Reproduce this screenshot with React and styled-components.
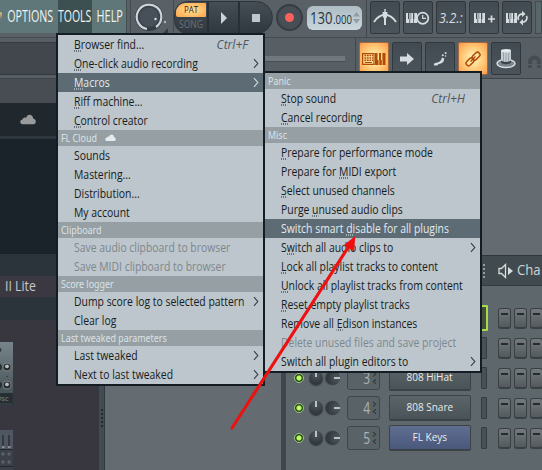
import React from "react";
import styled, { createGlobalStyle, css } from "styled-components";

const GlobalStyle = createGlobalStyle`
  * { box-sizing: border-box; }
  body {
    margin: 0;
    overflow: hidden;
    font-family: "Open Sans", "Noto Sans", sans-serif;
  }
`;

const color = {
  ink: "#171c21",
  menu: "#bdc6cc",
  menuHeader: "#959fa4",
  menuActive: "#5d6b74",
  border: "#141d24",
  icon: "#d5dde0",
};

const Screen = styled.div`
  position: relative;
  display: flex;
  flex-direction: column;
  width: 542px;
  height: 470px;
  overflow: hidden;
  background: #646b71;
`;

/* ---------- toolbar ---------- */

const Toolbar = styled.header`
  flex: none;
  height: 79px;
  background: #575f65;
  border-bottom: 1px solid #3d444a;
`;

const TopRow = styled.div`
  display: flex;
  height: 38px;
  border-bottom: 1px solid #434a50;
  background: #596167;
`;

const MenuBar = styled.nav`
  display: flex;
  width: 127px;
  height: 33px;
  flex: none;
  background: #5f7778;
  border-right: 1px solid #465052;
`;

const MenuTab = styled.div`
  display: flex;
  flex: none;
  align-items: center;
  justify-content: center;
  overflow: hidden;
  width: ${props => props.$width}px;
  color: ${props => props.$color || "#eef4f3"};
  background: ${props => props.$open ? "#3c5052" : "transparent"};
`;

const Squeezed = styled.span`
  display: block;
  flex: none;
  white-space: nowrap;
  font-size: ${props => props.$size}px;
  font-weight: ${props => props.$weight || 400};
  line-height: 1.3;
  transform: scaleX(${props => props.$scale});
  transform-origin: ${props => props.$origin || "center"};
`;

const KnobCell = styled.div`
  width: 44px;
  height: 37px;
  flex: none;
  margin-left: 3px;
  border-left: 1px solid #444b51;
  border-right: 1px solid #444b51;
`;

const Transport = styled.div`
  display: flex;
  flex: none;
  width: 99px;
  height: 33px;
  margin: 1px 0 0 0;
  border: 1px solid #2d343a;
  border-radius: 14px 17px 17px 14px;
  overflow: hidden;
  background: linear-gradient(#454e55, #30383f);
`;

const ModeSwitch = styled.div`
  display: flex;
  flex-direction: column;
  align-items: center;
  width: 34px;
  padding: 1px 2px;
  border-right: 2px solid #282f35;
`;

const PatMode = styled.div`
  display: flex;
  justify-content: center;
  align-items: center;
  width: 30px;
  height: 14px;
  border-radius: 9px 1px 1px 2px;
  color: #33200d;
  background: radial-gradient(#ffe3a0, #ffad50 85%);
`;

const SongMode = styled.div`
  margin-top: 1px;
  color: #687077;
`;

const TransportButton = styled.div`
  display: flex;
  align-items: center;
  justify-content: center;
  width: 31px;
  border-right: ${props => props.$last ? "0" : "2px solid #282f35"};
`;

const RecordButton = styled.div`
  display: flex;
  align-items: center;
  justify-content: center;
  flex: none;
  width: 27px;
  height: 27px;
  margin: 4px 0 0 3px;
  border: 2px solid #353c42;
  border-radius: 50%;
  background: #484e55;

  &::before {
    content: "";
    width: 9px;
    height: 9px;
    border-radius: 50%;
    background: #fb625b;
  }
`;

const Tempo = styled.div`
  display: flex;
  align-items: center;
  flex: none;
  width: 55px;
  height: 24px;
  margin: 6px 0 0 4px;
  padding-left: 3px;
  border-radius: 6px;
  color: #27343c;
  background: linear-gradient(#aebdc4, #c9d6dc);
`;

const TempoWhole = styled.div`
  width: 23px;
`;

const TempoFraction = styled.div`
  width: 20px;
  padding-top: 4px;
`;

const ToolGroup = styled.div`
  display: flex;
  gap: 3px;
  flex: none;
  height: ${props => props.$height}px;
  margin-left: ${props => props.$gap}px;
  padding: ${props => props.$pad};
  border-left: 1px solid #41484e;
`;

const ToolButton = styled.div`
  display: flex;
  align-items: center;
  justify-content: center;
  width: 30px;
  height: 33px;
  border: 1px solid #31383d;
  border-radius: 2px;
  background: linear-gradient(#434b52, #4c545b);
  color: ${color.icon};

  ${props => props.$lit && css`
    border-color: #a6683c;
    color: #b04c05;
    background: radial-gradient(#fff0b5 10%, #ffc36f 60%, #ff994d);
  `}
`;

const EdgePanel = styled.div`
  width: 10px;
  height: 33px;
  margin: 1px 0 0 3px;
  border: 1px solid #414c4e;
  background: #566769;
`;

const SecondRow = styled.div`
  display: flex;
  height: 40px;
`;

const HintPanel = styled.div`
  width: 200px;
  height: 33px;
  margin-top: 4px;
  flex: none;
  border-top: 1px solid #343a40;
  border-bottom: 1px solid #343a40;
  background: #42474e;
`;

const SliderLane = styled.div`
  flex: none;
  width: 155px;
  height: 40px;
  padding-top: 18px;

  &::before {
    content: "";
    display: block;
    width: 145px;
    height: 5px;
    background: #72797e;
    border-bottom: 1px solid #484f55;
  }
`;

const Magnet = styled.div`
  margin: 14px 0 0 6px;
  width: 15px;
  overflow: hidden;
`;

/* ---------- workspace ---------- */

const Workspace = styled.main`
  display: flex;
  flex: 1;
  min-height: 0;
`;

const Browser = styled.aside`
  flex: none;
  width: 98px;
  background: #38363f;
`;

const BrowserBand = styled.div`
  display: flex;
  align-items: center;
  height: ${props => props.$height}px;
  padding-left: ${props => props.$pad || 0}px;
  color: #c7c9cc;
  background: ${props => props.$fill};
  border-bottom: ${props => props.$line ? `${props.$line}px solid #2e363d` : "0"};
`;

const Splitter = styled.div`
  display: flex;
  align-items: flex-end;
  justify-content: center;
  flex: none;
  width: 7px;
  padding-bottom: 42px;
  border-left: 1px solid #333940;
  border-right: 1px solid #31383d;
  background: #434c52;
`;

const Grip = styled.div`
  width: 2px;
  height: ${props => props.$height}px;
  background: repeating-linear-gradient(${props => props.$color} 0 2px, transparent 2px 4px);
`;

const Desktop = styled.section`
  flex: 1;
  min-width: 0;
  padding: 176px 0 0 176px;
  background: #646b71;
`;

const Rack = styled.div`
  height: 100%;
  overflow: hidden;
  border-left: 5px solid #3f474d;
  border-top: 1px solid #30373c;
  background: #5e676b;
`;

const RackTitle = styled.div`
  display: flex;
  align-items: center;
  justify-content: flex-end;
  height: 30px;
  overflow: hidden;
  border-bottom: 1px solid #343c40;
  background: #414a4e;
  color: #ced4d7;
`;

const Speaker = styled.svg`
  flex: none;
  margin-left: 13px;
`;

const RackName = styled.div`
  width: 25px;
  margin-left: 3px;
`;

const Channels = styled.div`
  padding-top: 17px;
`;

const Channel = styled.div`
  display: flex;
  align-items: center;
  height: 30px;
  padding-left: 8px;
`;

const Led = styled.div`
  width: 10px;
  height: 10px;
  flex: none;
  border: 1px solid #98c581;
  border-radius: 50%;
  background: radial-gradient(#bcff62 35%, #26451b 55%);
`;

const Knob = styled.div`
  display: flex;
  justify-content: center;
  flex: none;
  width: 14px;
  height: 14px;
  margin-left: ${props => props.$gap}px;
  border-radius: 50%;
  background: radial-gradient(circle at 50% 25%, #50575e, #2d343a 80%);
  box-shadow: 0 1px 1px #343b40;
  transform: rotate(${props => props.$turn || 0}deg);

  &::before {
    content: "";
    width: 2px;
    height: 6px;
    background: #b8c0c4;
  }
`;

const ChannelNumber = styled.div`
  display: flex;
  align-items: center;
  justify-content: flex-end;
  gap: 2px;
  flex: none;
  width: 33px;
  height: 24px;
  margin-left: 7px;
  padding-right: 2px;
  border: 1px solid #3e464b;
  border-radius: 3px;
  color: #adb4b6;
  background: #596367;
`;

const ChannelButton = styled.div`
  display: flex;
  align-items: center;
  justify-content: center;
  flex: none;
  width: 82px;
  height: 26px;
  margin-left: 9px;
  border: 1px solid #3b4348;
  border-bottom-width: 2px;
  border-radius: 2px;
  color: #e8ebec;
  background: ${props => props.$blue
    ? "linear-gradient(#5f6e91, #4a587b)"
    : "linear-gradient(#5b6467, #4a5357)"};
`;

const Selector = styled.div`
  flex: none;
  width: 6px;
  height: 22px;
  margin: 0 11px 0 10px;
  border: 1px solid #353d42;
  border-radius: 1px;
  background: #485156;

  ${props => props.$on && css`
    width: 8px;
    height: 26px;
    margin: 0 10px 0 9px;
    border: 2px solid #a6dc4c;
    background: #454f3f;
  `}
`;

const Step = styled.div`
  flex: none;
  width: 13px;
  height: 21px;
  margin-right: 3px;
  padding: 4px 2px;
  border: 1px solid #3a4145;
  border-bottom-width: 2px;
  border-radius: 3px;
  background: linear-gradient(#73797c, #53595d);

  &::before {
    content: "";
    display: block;
    height: 2px;
    background: #252b2f;
  }
`;

/* ---------- menus ---------- */

const Menu = styled.div`
  position: absolute;
  left: ${props => props.$left}px;
  top: ${props => props.$top}px;
  width: ${props => props.$width}px;
  border: 2px solid ${color.border};
  background: ${color.menu};
`;

const MenuHeader = styled.div`
  display: flex;
  align-items: center;
  height: 16px;
  padding-left: 3px;
  color: #dce3e7;
  background: ${color.menuHeader};
`;

const HeaderLabel = styled(Squeezed)`
  margin-right: 4px;
  font-family: "Noto Sans", sans-serif;
  line-height: 15px;
`;

const MenuRow = styled.div`
  display: flex;
  align-items: center;
  justify-content: space-between;
  height: 19px;
  padding: 0 4px 0 16px;
  font-size: 12px;
  line-height: 19px;
  white-space: nowrap;
  color: ${color.ink};
  ${props => props.$disabled && `color: #7e878c;`}
  ${props => props.$active && `color: #e3eaee; background: ${color.menuActive};`}
`;

const ItemLabel = styled.span`
  flex: 1;
  width: 0;
  transform: translateY(-0.5px) scaleX(0.867);
  transform-origin: left;
`;

const Mnemonic = styled.span`
  position: relative;

  &::after {
    content: "";
    position: absolute;
    left: 0;
    right: 0;
    bottom: 0.9px;
    height: 1px;
    background: repeating-linear-gradient(90deg, currentColor 0 1.15px, transparent 1.15px 2.3px);
  }
`;

const Shortcut = styled.span`
  padding-right: 11px;
  color: #4e565c;
  font-style: italic;
`;

const Annotation = styled.svg`
  position: absolute;
  left: 0;
  top: 0;
`;

const Cloud = ({ width, fill }) => (
  <svg width={width} height={width * 0.65} viewBox="0 0 16 10.4">
    <path d="M2.5 10.2C-.6 9.5-.3 6 2.6 5.6 3 3.6 5 3.2 6.2 3.9 6.8.1 12.7-.6 13.2 4.6 16.7 5.6 16.4 9.6 13.8 10.2Z" fill={fill} />
  </svg>
);

const Chevron = ({ light }) => (
  <svg width="6" height="11" viewBox="0 0 6 11">
    <path d="M1 1.2 4.8 5.5 1 9.8" fill="none" stroke={light ? "#d4dde2" : "#343b41"} strokeWidth="1.1" />
  </svg>
);

// text with "_" marks the next letter as the keyboard mnemonic
const Item = ({ text, shortcut, sub, disabled, active }) => {
  const [before, after] = text.split("_");
  return (
    <MenuRow $disabled={disabled} $active={active}>
      <ItemLabel>
        {before}
        {after && <Mnemonic>{after[0]}</Mnemonic>}
        {after && after.slice(1)}
      </ItemLabel>
      {shortcut && <Shortcut>{shortcut}</Shortcut>}
      {sub && <Chevron light={active} />}
    </MenuRow>
  );
};

const toolsMenu = [
  { text: "_Browser find...", shortcut: "Ctrl+F" },
  { text: "_One-click audio recording", sub: true },
  { text: "_Macros", sub: true, active: true },
  { text: "_Riff machine..." },
  { text: "_Control creator" },
  { header: "FL Cloud", cloud: true },
  { text: "Sounds" },
  { text: "Mastering..." },
  { text: "Distribution..." },
  { text: "My account" },
  { header: "Clipboard" },
  { text: "Save audio clipboard to browser", disabled: true },
  { text: "Save MIDI clipboard to browser", disabled: true },
  { header: "Score logger" },
  { text: "Dump score log to selected pattern", sub: true },
  { text: "Clear log" },
  { header: "Last tweaked parameters" },
  { text: "Last tweaked", sub: true },
  { text: "Next to last tweaked", sub: true },
];

const macrosMenu = [
  { header: "Panic" },
  { text: "_Stop sound", shortcut: "Ctrl+H" },
  { text: "_Cancel recording" },
  { header: "Misc" },
  { text: "_Prepare for performance mode" },
  { text: "Prepare for _MIDI export" },
  { text: "_Select unused channels" },
  { text: "Purge _unused audio clips" },
  { text: "Switch smart _disable for all plugins", active: true },
  { text: "S_witch all audio clips to", sub: true },
  { text: "_Lock all playlist tracks to content" },
  { text: "_Unlock all playlist tracks from content" },
  { text: "_Reset empty playlist tracks" },
  { text: "Remove all _Edison instances" },
  { text: "Delete unused files and save project", disabled: true },
  { text: "Switch all plugin editors to", sub: true },
];

const renderMenu = (entries) => entries.map((entry) => (
  entry.header
    ? <MenuHeader key={entry.header}>
        <HeaderLabel $size={10} $scale={0.89} $origin="left">{entry.header}</HeaderLabel>
        {entry.cloud && <Cloud width={11} fill="#e4ebee" />}
      </MenuHeader>
    : <Item key={entry.text} {...entry} />
));

const MainKnob = () => (
  <svg width="42" height="37" viewBox="131 0 42 37">
    <circle cx="149" cy="17" r="12.5" fill="#3b434a" stroke="#343c42" strokeWidth="3" />
    <path d="M147 29A12.3 12.3 0 1 1 156 27" fill="none" stroke="#cbd5da" strokeWidth="2.2" />
    <circle cx="149" cy="17" r="9.5" fill="#475058" />
    <circle cx="155.5" cy="19" r="1.2" fill="#d5dee2" />
    <circle cx="165" cy="22" r="1.2" fill="#aab3b8" />
    <path d="M168 28V33H163Z" fill="#343c42" />
  </svg>
);

const Keys = () => (
  <path
    fillRule="evenodd"
    fill="currentColor"
    d="M0 0H2V6H3.3V0H4.6V6H5.2V0H7V6H8.3V0H11V10H0ZM3.4 6H4.2V10H3.4ZM7.3 6H8V10H7.3Z"
  />
);

const KeysIcon = ({ children, width = 24 }) => (
  <svg width={width} height="16" viewBox={`0 -3 ${width} 16`} fill="none" stroke="currentColor" strokeWidth="1.7">
    <g stroke="none"><Keys /></g>
    {children}
  </svg>
);

const MetronomeIcon = () => (
  <svg width="24" height="18" viewBox="0 0 24 18" fill="none" stroke="currentColor">
    <path d="M1 13Q5 6.5 12 5.5 19 6.5 23 13" strokeWidth="1.8" />
    <path d="M9.5 3H14.5L14 8 13 9.5V16H11V9.5L10 8Z" fill="currentColor" stroke="none" />
    <path d="M12 0V3" strokeWidth="1.4" />
  </svg>
);

const TypingIcon = () => (
  <svg width="24" height="14" viewBox="0 0 24 14">
    <path d="M.6 1.6H12V12.4H.6Z" fill="none" stroke="currentColor" strokeWidth="1.2" />
    <path d="M2.5 3.5H11M2.5 6H11M2.5 8.3H11" stroke="currentColor" strokeWidth="1.5" strokeDasharray="1.7 .8" />
    <path d="M3 10.5H10" stroke="currentColor" strokeWidth="1" />
    <path d="M13 1H15.5V8H16.5V13H13ZM17.3 13V8H17V1H19V8H19.8V13ZM20.6 13V8H20.4V1H23.5V13Z" fill="currentColor" />
  </svg>
);

const ArrowIcon = () => (
  <svg width="16" height="14" viewBox="0 0 16 14">
    <path d="M1 4.5H8V1L15 7 8 13V9.5H1Z" fill="currentColor" />
  </svg>
);

const SlideIcon = () => (
  <svg width="16" height="16" viewBox="0 0 16 16" fill="currentColor">
    <path d="M10 6.5 12.3 7.5Q12 12.5 6.5 13.2L5 14.5H2.2Q1.2 13.3 2.5 12.3L7 11Q9.5 10 10 6.5Z" />
    <circle cx="10.8" cy="4.2" r="1" />
    <circle cx="13.6" cy="2" r="1" />
    <circle cx="13.6" cy="5" r=".8" />
  </svg>
);

const LinkIcon = () => (
  <svg width="18" height="18" viewBox="0 0 18 18" fill="none" stroke="currentColor" strokeWidth="1.5">
    <rect x="7.5" y="3.7" width="9" height="5" rx="2.5" transform="rotate(-45 12 6.2)" />
    <rect x="1.5" y="9.3" width="9" height="5" rx="2.5" transform="rotate(-45 6 11.8)" />
    <path d="M6.5 11.5 11.5 6.5" />
  </svg>
);

const HatIcon = () => (
  <svg width="20" height="21" viewBox="0 0 20 21">
    <ellipse cx="10" cy="15.5" rx="9" ry="4" fill="#7a838a" stroke="currentColor" strokeWidth="1.5" />
    <path d="M5 2.5V15Q10 18 15 15V2.5Z" fill="#c4cdd2" />
    <path d="M7.5 4V14M10 4V15M12.6 4V14" stroke="#8a949b" strokeWidth=".8" />
    <path d="M5 12.5Q10 15.5 15 12.5V15Q10 18 5 15Z" fill="#3c444b" />
    <ellipse cx="10" cy="2.7" rx="5" ry="1.7" fill="#e4eaed" />
  </svg>
);

const Devices = () => (
  <svg width="14" height="150" viewBox="0 320 14 150">
    <defs>
      <linearGradient id="metal" x2="0" y2="1">
        <stop stopColor="#77848b" />
        <stop offset="1" stopColor="#48565a" />
      </linearGradient>
    </defs>
    <rect y="342" width="13" height="51" fill="url(#metal)" />
    <rect y="393" width="13" height="12" fill="#263034" />
    <text x="-4.5" y="401" fontSize="7.5" fill="#77868a">Osc</text>
    <path d="M0 404H12" stroke="#4c595d" strokeWidth=".7" />
    {[367, 385].map(y => (
      <g key={y}>
        <circle cx="-1.5" cy={y} r="3.5" fill="#272d31" />
        <circle cx="7" cy={y} r="4.3" fill="#8b9294" />
        <circle cx="7" cy={y} r="3.6" fill="#292d30" />
        <circle cx="7" cy={y - 0.7} r="1.9" fill="#b9bdbd" />
      </g>
    ))}
    <circle cx="-.5" cy="350" r="2" fill="#30383d" />
    <circle cx="7" cy="376.5" r=".7" fill="#293035" />
    <rect y="430" width="13" height="40" fill="#3c4049" />
    <rect y="430" width="13" height="19" fill="#505762" />
    <path d="M3 435V447M9 435V447" stroke="#242832" strokeWidth="1.3" />
    <path d="M2 447H4.5M8 447H10.5" stroke="#9fa4ac" strokeWidth="1.5" />
    <path d="M0 449.5H13M0 466.5H13" stroke="#242832" />
    {[454, 462].map(y => (
      <g key={y} fill="#5b616c">
        <circle cx="3" cy={y} r="1.7" />
        <circle cx="9" cy={y} r="1.7" />
      </g>
    ))}
  </svg>
);

const NumberArrows = () => (
  <svg width="5" height="16" viewBox="0 0 5 16" fill="none" stroke="#343c41" strokeWidth="1.2">
    <path d="M1 2 3.7 4.3 1 6.6M4 9.2 1.3 11.5 4 13.8" />
  </svg>
);

// the first two channels sit behind the open menu, only their steps show
const channels = [
  { id: 1, selected: true },
  { id: 2 },
  { id: 3, name: "808 HiHat" },
  { id: 4, name: "808 Snare" },
  { id: 5, name: "FL Keys", blue: true },
];

export default function App() {
  return (
    <Screen>
      <GlobalStyle />
      <Toolbar>
        <TopRow>
          <MenuBar>
            <MenuTab $width={2} $color="#e8c174"><Squeezed $size={15} $scale={0.7}>W</Squeezed></MenuTab>
            <MenuTab $width={56}><Squeezed $size={15.5} $scale={0.69}>OPTIONS</Squeezed></MenuTab>
            <MenuTab $width={34} $open><Squeezed $size={15.5} $scale={0.68}>TOOLS</Squeezed></MenuTab>
            <MenuTab $width={35}><Squeezed $size={15.5} $scale={0.7}>HELP</Squeezed></MenuTab>
          </MenuBar>
          <KnobCell><MainKnob /></KnobCell>
          <Transport>
            <ModeSwitch>
              <PatMode><Squeezed $size={9} $scale={0.88} $weight={500}>PAT</Squeezed></PatMode>
              <SongMode><Squeezed $size={10} $scale={0.86}>SONG</Squeezed></SongMode>
            </ModeSwitch>
            <TransportButton>
              <svg width="8" height="12"><path d="M1 0 7 6 1 12Z" fill="#cbd3d6" /></svg>
            </TransportButton>
            <TransportButton $last>
              <svg width="8" height="8"><rect width="8" height="8" fill="#bdc6ca" /></svg>
            </TransportButton>
          </Transport>
          <RecordButton />
          <Tempo>
            <TempoWhole><Squeezed $size={16} $scale={0.82} $origin="left">130</Squeezed></TempoWhole>
            <TempoFraction><Squeezed $size={12} $scale={0.8} $origin="left">.000</Squeezed></TempoFraction>
            <svg width="7" height="12"><path d="M0 4.5 3.5 0 7 4.5ZM0 7 3.5 11.5 7 7Z" fill="#8f9ca3" /></svg>
          </Tempo>
          <ToolGroup $height={37} $gap={4} $pad="1px 0 0 3px">
            <ToolButton><MetronomeIcon /></ToolButton>
            <ToolButton>
              <KeysIcon>
                <circle cx="16.7" cy="5.2" r="5.6" fill="#485057" />
                <path d="M16.7 2V5.4H20" strokeWidth="1.2" />
              </KeysIcon>
            </ToolButton>
            <ToolButton>
              <Squeezed as="i" $size={15} $scale={0.85}>3.2.:</Squeezed>
            </ToolButton>
            <ToolButton><KeysIcon width={21}><path d="M14 6H21M17.5 2.5V9.5" /></KeysIcon></ToolButton>
            <ToolButton>
              <KeysIcon width={22}>
                <path d="M12.6 7A4.3 4.3 0 0 1 16.5 .8M20.4 3A4.3 4.3 0 0 1 16.5 9.2" />
                <path d="M16-2.2 19.5 .9 16 4ZM17 6 13.5 9.2 17 12.4Z" fill="currentColor" stroke="none" />
              </KeysIcon>
            </ToolButton>
          </ToolGroup>
          <EdgePanel />
        </TopRow>
        <SecondRow>
          <HintPanel />
          <SliderLane />
          <ToolGroup $height={40} $gap={0} $pad="4px 0 0 3px">
            <ToolButton $lit><TypingIcon /></ToolButton>
            <ToolButton><ArrowIcon /></ToolButton>
            <ToolButton><SlideIcon /></ToolButton>
            <ToolButton $lit><LinkIcon /></ToolButton>
            <ToolButton><HatIcon /></ToolButton>
          </ToolGroup>
          <Magnet>
            <svg width="15" height="15" fill="none" stroke="#454c52" strokeWidth="4">
              <path d="M3 14V8A4.5 4.5 0 0 1 12 8V14" />
              <path d="M0 10.5H15" stroke="#575f65" strokeWidth="1" />
            </svg>
          </Magnet>
        </SecondRow>
      </Toolbar>

      <Workspace>
        <Browser>
          <BrowserBand $height={24} $fill="#484d54" />
          <BrowserBand $height={36} $fill="#20272d" $line={3} $pad={20}>
            <Cloud width={16} fill="#989a9b" />
          </BrowserBand>
          <BrowserBand $height={115} $fill="#1a222a" />
          <BrowserBand $height={22} $fill="#2b343a" />
          <BrowserBand $height={22} $fill="#3b3841" $line={1} $pad={5}>
            <Squeezed $size={14} $scale={0.88} $origin="left">II Lite</Squeezed>
          </BrowserBand>
          <BrowserBand $height={22} $fill="#2b343a" $line={1} />
          <Devices />
        </Browser>
        <Splitter><Grip $height={19} $color="#242b31" /></Splitter>
        <Desktop>
          <Rack>
            <RackTitle>
              <Grip $height={14} $color="#949c9f" />
              <Speaker width="16" height="16" viewBox="0 0 16 16">
                <path d="M1 5.5H3.5L7.5 1.5V14.5L3.5 10.5H1Z" fill="none" stroke="#d7dcde" strokeWidth="1.3" />
                <path d="M10 4 15 8 10 12Z" fill="#d7dcde" />
              </Speaker>
              <RackName><Squeezed $size={14} $scale={0.94} $origin="left">Cha</Squeezed></RackName>
            </RackTitle>
            <Channels>
              {channels.map(channel => (
                <Channel key={channel.id}>
                  <Led />
                  <Knob $gap={5} />
                  <Knob $gap={3} $turn={90} />
                  <ChannelNumber>
                    {channel.name && <Squeezed $size={16} $scale={0.75} $origin="right">{channel.id}</Squeezed>}
                    <NumberArrows />
                  </ChannelNumber>
                  <ChannelButton $blue={channel.blue}>
                    <Squeezed $size={11.5} $scale={0.87} $weight={500}>{channel.name}</Squeezed>
                  </ChannelButton>
                  <Selector $on={channel.selected} />
                  <Step />
                  <Step />
                  <Step />
                </Channel>
              ))}
            </Channels>
          </Rack>
        </Desktop>
      </Workspace>

      <Menu $left={56} $top={33} $width={209}>{renderMenu(toolsMenu)}</Menu>
      <Menu $left={263} $top={71} $width={219}>{renderMenu(macrosMenu)}</Menu>

      <Annotation width="542" height="470">
        <path d="M232 428 349 246" stroke="#ee1111" strokeWidth="3.1" strokeLinecap="round" />
        <path d="M355.3 236 344 245 354 251.5Z" fill="#f20d0d" />
      </Annotation>
    </Screen>
  );
}
